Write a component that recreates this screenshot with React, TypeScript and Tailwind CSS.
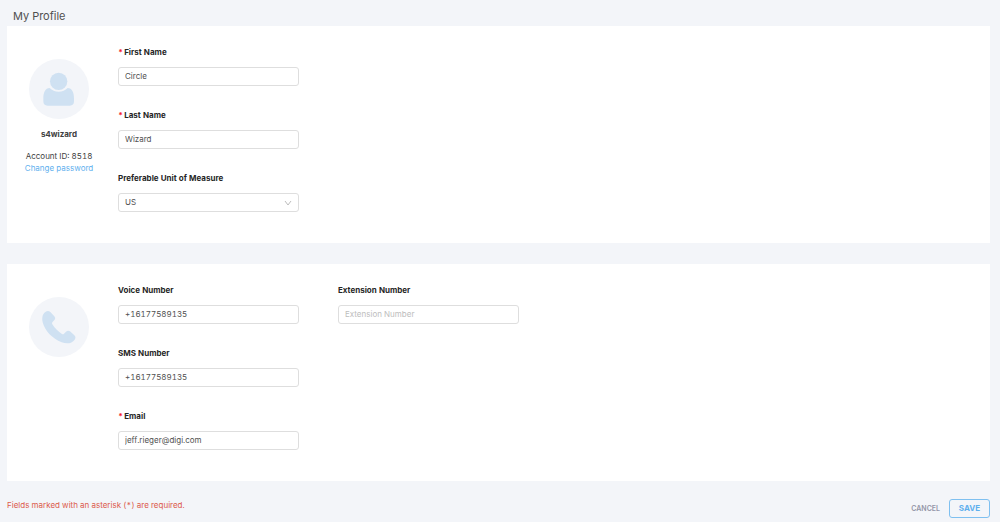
import { useState } from "react";

const FONT = "font-['Inter','Liberation_Sans',sans-serif]";

const CONTROL =
  "block h-[19px] w-full rounded-[3px] border border-[#dedede] bg-white px-1.5 pb-0.5 text-[8px] leading-3 text-[#505050] placeholder:text-[#bdbdbd] focus:border-[#5fb0ee] focus:outline-none";

interface FieldProps {
  id: string;
  label: string;
  required?: boolean;
  children: React.ReactNode;
}

function Field({ id, label, required, children }: FieldProps) {
  return (
    <div className="w-[181px]">
      <label htmlFor={id} className="mb-[9px] block text-[8px] leading-3 font-bold text-[#262626]">
        {required && <span className="mr-px text-[#f5222d]">*</span>}
        {label}
      </label>
      {children}
    </div>
  );
}

interface TextFieldProps {
  id: string;
  label: string;
  initial?: string;
  type?: string;
  placeholder?: string;
  required?: boolean;
}

function TextField({ id, label, initial = "", type = "text", placeholder, required }: TextFieldProps) {
  const [value, setValue] = useState(initial);

  return (
    <Field id={id} label={label} required={required}>
      <input
        id={id}
        type={type}
        value={value}
        onChange={(e) => setValue(e.target.value)}
        placeholder={placeholder}
        required={required}
        className={CONTROL}
      />
    </Field>
  );
}

function UserIcon() {
  return (
    <svg viewBox="0 0 180 180" className="size-[60px] rounded-full bg-[#f3f5f9]" fill="#cfe1f2" aria-hidden="true">
      <circle cx="89" cy="67" r="26" />
      <path d="M62 87C49 88 43 99 43 119V127Q43 140 56 140H122Q135 140 135 127V119C135 99 129 88 116 87C109 94 100 98 89 98S69 94 62 87Z" />
    </svg>
  );
}

function PhoneIcon() {
  return (
    <svg viewBox="0 0 180 180" className="size-[60px] rounded-full bg-[#f3f5f9]" fill="#cfe1f2" aria-hidden="true">
      <path d="M49 45Q57 39 64 45L76 58Q81 63 77 68L70 76Q68 79 70 82C78 95 88 104 99 111Q102 113 105 110L111 104Q117 99 123 103L136 115Q142 121 137 128C129 139 115 142 98 136C70 125 48 102 41 76C38 62 41 50 49 45Z" />
    </svg>
  );
}

export default function App() {
  const [unit, setUnit] = useState("US");

  return (
    <form
      onSubmit={(e) => e.preventDefault()}
      className={`min-h-screen bg-[#f3f5f9] pr-[10px] pb-1 pl-[7px] text-[#404040] tabular-nums ${FONT}`}
    >
      <h1 className="px-1.5 pt-2 pb-[2px] text-[11px] leading-4 text-[#505050]">My Profile</h1>

      <section className="flex gap-[7px] bg-white pt-5 pb-[31px]">
        <div className="flex w-[104px] shrink-0 flex-col items-center pt-[13px] text-[8px] leading-3">
          <UserIcon />
          <p className="mt-[9px] font-bold">s4wizard</p>
          <p className="mt-[10px]">Account ID: 8518</p>
          <a href="#password" className="text-[#5fb0ee] hover:underline">
            Change password
          </a>
        </div>
        <div className="flex flex-col gap-[23px]">
          <TextField id="first-name" label="First Name" initial="Circle" required />
          <TextField id="last-name" label="Last Name" initial="Wizard" required />
          <Field id="unit" label="Preferable Unit of Measure">
            <div className="relative">
              <select
                id="unit"
                value={unit}
                onChange={(e) => setUnit(e.target.value)}
                className={`${CONTROL} appearance-none`}
              >
                <option>US</option>
                <option>Metric</option>
              </select>
              <svg
                viewBox="0 0 8 8"
                className="pointer-events-none absolute top-1.5 right-[7px] size-2"
                fill="none"
                stroke="#bdbdbd"
                aria-hidden="true"
              >
                <path d="M1 2L4 6L7 2" />
              </svg>
            </div>
          </Field>
        </div>
      </section>

      <section className="mt-[21px] flex gap-[7px] bg-white pt-5 pb-[31px]">
        <div className="flex w-[104px] shrink-0 flex-col items-center pt-[13px]">
          <PhoneIcon />
        </div>
        <div className="flex flex-col gap-[23px]">
          <div className="flex gap-[39px]">
            <TextField id="voice" label="Voice Number" type="tel" initial="+16177589135" />
            <TextField id="extension" label="Extension Number" placeholder="Extension Number" />
          </div>
          <TextField id="sms" label="SMS Number" type="tel" initial="+16177589135" />
          <TextField id="email" label="Email" type="email" initial="jeff.rieger@digi.com" required />
        </div>
      </section>

      <footer className="flex items-start justify-between pt-[18px]">
        <p className="text-[8px] leading-3 text-[#dc5a4c]">Fields marked with an asterisk (*) are required.</p>
        <div className="flex items-center gap-[9px]">
          <button type="button" className="cursor-pointer text-[7px] leading-3 font-semibold text-[#9496a8]">
            CANCEL
          </button>
          <button
            type="submit"
            className="h-[19px] w-[41px] cursor-pointer rounded-[3px] border border-[#7fc0f0] pb-0.5 text-[8px] leading-3 font-bold text-[#5fb0ee]"
          >
            SAVE
          </button>
        </div>
      </footer>
    </form>
  );
}
